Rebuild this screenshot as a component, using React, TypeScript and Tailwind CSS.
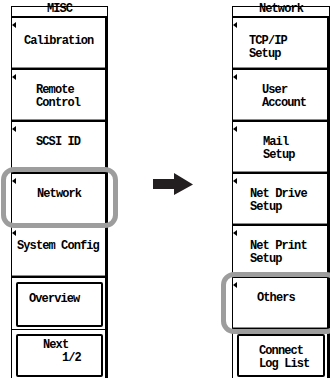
import React from "react";

type Key = {
  label: string;
  indent: number;
  top?: number;
  ring?: { left: number; top: number; width: number; height: number };
};

const leftKeys: Key[] = [
  { label: "Calibration", indent: 12, top: 17 },
  { label: "Remote\nControl", indent: 24 },
  { label: "SCSI ID", indent: 24 },
  { label: "Network", indent: 25, ring: { left: -11, top: -7, width: 117, height: 61 } },
  { label: "System Config", indent: 5 },
];

const rightKeys: Key[] = [
  { label: "TCP/IP\nSetup", indent: 16, top: 17 },
  { label: "User\nAccount", indent: 29 },
  { label: "Mail\nSetup", indent: 30 },
  { label: "Net Drive\nSetup", indent: 17 },
  { label: "Net Print\nSetup", indent: 17 },
  { label: "Others", indent: 24, ring: { left: -12, top: -6, width: 118, height: 62 } },
];

const font =
  "font-[family-name:Liberation_Mono,monospace] font-bold text-[12px] leading-[13px] tracking-[-0.9px] text-black whitespace-pre";

function SoftKey({ k }: { k: Key }) {
  return (
    <div
      className="relative h-[52px] border-b-2 border-black shadow-[inset_0_-1px_0_#8a8a8a]"
      style={{ paddingTop: k.top ?? 14, paddingLeft: k.indent }}
    >
      {/* little left pointing marker */}
      <span className="absolute left-0 top-[4px] h-0 w-0 border-y-[3px] border-y-transparent border-r-[4px] border-r-black" />
      <div className={font}>{k.label}</div>
      {k.ring && (
        <div
          className="absolute rounded-[13px] border-[5px] border-[#9d9d9d]"
          style={{ left: k.ring.left, top: k.ring.top, width: k.ring.width, height: k.ring.height }}
        />
      )}
    </div>
  );
}

function BoxKey({ label, indent, pt, h, divider }: { label: string; indent: number; pt: number; h: number; divider?: boolean }) {
  return (
    <div className={`pt-[4px] pl-[4px] pr-[2px] ${divider ? "h-[52px] border-b border-black" : "h-[48px]"}`}>
      <div
        className="rounded-[2px] border-2 border-black"
        style={{ height: h, paddingTop: pt, paddingLeft: indent }}
      >
        <div className={font}>{label}</div>
      </div>
    </div>
  );
}

function Header({ title }: { title: string }) {
  return (
    <div className="flex h-[12px] items-end justify-center border border-b-2 border-black">
      <span className={`${font} leading-[10px]`}>{title}</span>
    </div>
  );
}

export default function App() {
  return (
    <div className="relative flex h-[378px] w-[330px] overflow-hidden bg-white">
      {/* MISC menu */}
      <div className="ml-[11px] mt-[6px] w-[97px] shrink-0">
        <Header title="MISC" />
        <div className="border-l border-r-[3px] border-black">
          {leftKeys.map((k) => (
            <SoftKey key={k.label} k={k} />
          ))}
          <BoxKey label="Overview" indent={11} pt={9} h={45} divider />
          <BoxKey label={"Next\n   1/2"} indent={25} pt={3} h={43} />
        </div>
      </div>

      {/* arrow */}
      <div className="w-[124px] shrink-0 pl-[45px] pt-[173px]">
        <svg width="41" height="23" viewBox="0 0 41 23">
          <polygon points="0,6 21,6 21,0 40,11.5 21,22 21,16 0,16" fill="#231f20" />
        </svg>
      </div>

      {/* Network menu */}
      <div className="mt-[6px] w-[98px] shrink-0">
        <Header title="Network" />
        <div className="border-l border-r-[3px] border-black">
          {rightKeys.map((k) => (
            <SoftKey key={k.label} k={k} />
          ))}
          <BoxKey label={"Connect\nLog List"} indent={20} pt={9} h={43} />
        </div>
      </div>
    </div>
  );
}
